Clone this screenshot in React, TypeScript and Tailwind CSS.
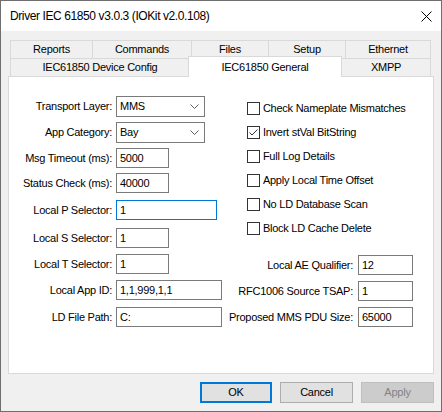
import React from "react";

const row1 = [
  { label: "Reports", w: "w-[83px]" },
  { label: "Commands", w: "w-[100px]" },
  { label: "Files", w: "w-[78px]" },
  { label: "Setup", w: "w-[78px]" },
  { label: "Ethernet", w: "w-[86px]" },
];

function Chevron() {
  return (
    <svg width="9" height="5" viewBox="0 0 9 5" className="shrink-0">
      <polyline points="0.5,0.5 4.5,4.5 8.5,0.5" fill="none" stroke="#606060" strokeWidth="1" />
    </svg>
  );
}

function Select({ value }: { value: string }) {
  return (
    <div className="flex h-[21px] w-[89px] items-center justify-between border border-[#7a7a7a] bg-white pl-[3px] pr-[5px]">
      <span>{value}</span>
      <Chevron />
    </div>
  );
}

function Field({ value, w, focus }: { value: string; w: string; focus?: boolean }) {
  return (
    <div
      className={`flex h-[20px] items-center border bg-white pl-[3px] ${w} ${
        focus ? "border-[#0078d7]" : "border-[#7a7a7a]"
      }`}
    >
      {value}
    </div>
  );
}

function Row({ label, mt, children }: { label: string; mt: string; children: React.ReactNode }) {
  return (
    <div className={`flex items-center ${mt}`}>
      <div className="mr-[4px] w-[103px] whitespace-nowrap text-right">{label}</div>
      {children}
    </div>
  );
}

function Check({ label, checked }: { label: string; checked?: boolean }) {
  return (
    <div className="flex h-[13px] items-center">
      <div className="flex h-[13px] w-[13px] items-center justify-center border border-[#333333] bg-white">
        {checked && (
          <svg width="11" height="11" viewBox="0 0 11 11">
            <polyline points="1.5,5.5 4,8 9.5,2.5" fill="none" stroke="#333333" strokeWidth="1" />
          </svg>
        )}
      </div>
      <span className="ml-[3px] whitespace-nowrap">{label}</span>
    </div>
  );
}

function RightField({ label, value }: { label: string; value: string }) {
  return (
    <div className="flex items-center justify-end">
      <span className="mr-[5px] whitespace-nowrap">{label}</span>
      <Field value={value} w="w-[55px]" />
    </div>
  );
}

export default function App() {
  return (
    <div className="flex h-[412px] w-[442px] flex-col border border-[#6f6f6f] bg-[#f0f0f0] font-['Liberation_Sans',Arial,sans-serif] text-[11px] tracking-[-0.25px] text-black">
      <div className="flex h-[30px] shrink-0 items-center justify-between bg-white pl-[9px] pr-[9px]">
        <span className="text-[12px] tracking-[-0.4px]">Driver IEC 61850 v3.0.3 (IOKit v2.0.108)</span>
        <svg width="11" height="11" viewBox="0 0 11 11">
          <path d="M0.5 0.5 L10.5 10.5 M10.5 0.5 L0.5 10.5" stroke="#000" strokeWidth="1" />
        </svg>
      </div>

      <div className="flex flex-col px-[7px] pt-[9px]">
        <div className="flex h-[18px] pl-[2px]">
          {row1.map((t, i) => (
            <div
              key={t.label}
              className={`flex h-full items-center justify-center border-x border-t border-[#d9d9d9] bg-[#f0f0f0] ${t.w} ${
                i > 0 ? "-ml-px" : ""
              }`}
            >
              {t.label}
            </div>
          ))}
        </div>
        <div className="flex h-[18px] items-end pl-[2px]">
          <div className="flex h-[18px] w-[180px] items-center justify-center border-x border-t border-[#d9d9d9] bg-[#f0f0f0]">
            IEC61850 Device Config
          </div>
          <div className="relative z-10 -mb-px -ml-[2px] flex h-[21px] w-[154px] items-start justify-center border-x border-t border-[#d9d9d9] bg-white pt-[2px]">
            IEC61850 General
          </div>
          <div className="-ml-px flex h-[18px] w-[90px] items-center justify-center border-x border-t border-[#d9d9d9] bg-[#f0f0f0]">
            XMPP
          </div>
        </div>

        <div className="flex h-[298px] border border-[#d9d9d9] bg-white">
          <div className="flex w-[221px] flex-col pt-[19px]">
            <Row label="Transport Layer:" mt="">
              <Select value="MMS" />
            </Row>
            <Row label="App Category:" mt="mt-[5px]">
              <Select value="Bay" />
            </Row>
            <Row label="Msg Timeout (ms):" mt="mt-[5px]">
              <Field value="5000" w="w-[53px]" />
            </Row>
            <Row label="Status Check (ms):" mt="mt-[5px]">
              <Field value="40000" w="w-[53px]" />
            </Row>
            <Row label="Local P Selector:" mt="mt-[7px]">
              <Field value="1" w="w-[101px]" focus />
            </Row>
            <Row label="Local S Selector:" mt="mt-[8px]">
              <Field value="1" w="w-[53px]" />
            </Row>
            <Row label="Local T Selector:" mt="mt-[6px]">
              <Field value="1" w="w-[53px]" />
            </Row>
            <Row label="Local App ID:" mt="mt-[6px]">
              <Field value="1,1,999,1,1" w="w-[106px]" />
            </Row>
            <Row label="LD File Path:" mt="mt-[7px]">
              <Field value="C:" w="w-[106px]" />
            </Row>
          </div>

          <div className="flex flex-1 flex-col pr-[20px] pt-[25px]">
            <div className="flex flex-col gap-[11px] pl-[18px]">
              <Check label="Check Nameplate Mismatches" />
              <Check label="Invert stVal BitString" checked />
              <Check label="Full Log Details" />
              <Check label="Apply Local Time Offset" />
              <Check label="No LD Database Scan" />
              <Check label="Block LD Cache Delete" />
            </div>
            <div className="mt-[20px] flex flex-col gap-[6px]">
              <RightField label="Local AE Qualifier:" value="12" />
              <RightField label="RFC1006 Source TSAP:" value="1" />
              <RightField label="Proposed MMS PDU Size:" value="65000" />
            </div>
          </div>
        </div>

        <div className="mt-[8px] flex justify-end gap-[8px]">
          <button className="flex h-[21px] w-[72px] items-center justify-center border-2 border-[#0078d7] bg-[#e1e1e1]">
            OK
          </button>
          <button className="flex h-[21px] w-[73px] items-center justify-center border border-[#adadad] bg-[#e1e1e1]">
            Cancel
          </button>
          <button className="flex h-[21px] w-[73px] items-center justify-center border border-[#bfbfbf] bg-[#cccccc] text-[#838383]">
            Apply
          </button>
        </div>
      </div>
    </div>
  );
}
